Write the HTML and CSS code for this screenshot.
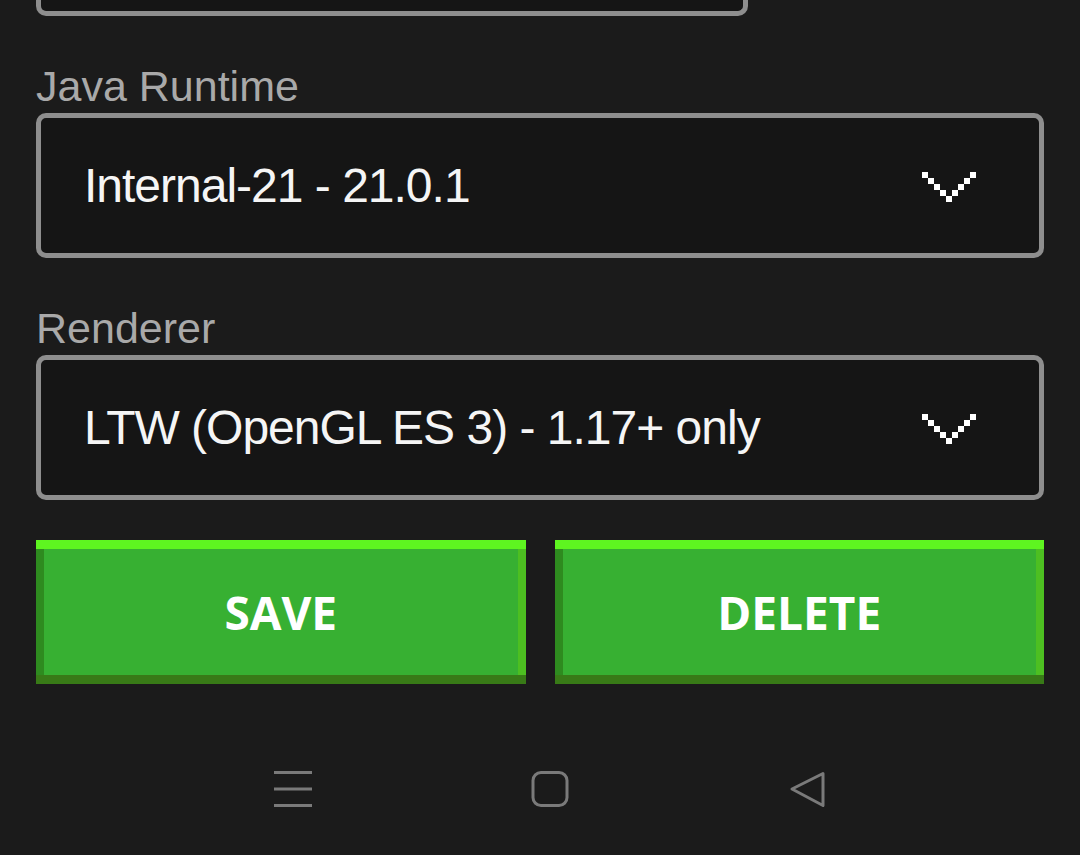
FILE: index.html
```html
<!DOCTYPE html>
<html lang="en">
<head>
<meta charset="utf-8">
<title>Profile editor</title>
<link rel="stylesheet" href="styles.css">
</head>
<body>
<div class="page">
  <div class="stub"></div>

  <div class="label">Java Runtime</div>
  <div class="select">
    <span class="value">Internal-21 - 21.0.1</span>
    <svg class="chev" width="54" height="30" viewBox="0 0 54 30">
      <rect x="0" y="0" width="6" height="6"/>
      <rect x="6" y="6" width="6" height="6"/>
      <rect x="12" y="12" width="6" height="6"/>
      <rect x="18" y="18" width="6" height="6"/>
      <rect x="24" y="24" width="6" height="6"/>
      <rect x="30" y="18" width="6" height="6"/>
      <rect x="36" y="12" width="6" height="6"/>
      <rect x="42" y="6" width="6" height="6"/>
      <rect x="48" y="0" width="6" height="6"/>
    </svg>
  </div>

  <div class="label">Renderer</div>
  <div class="select">
    <span class="value">LTW (OpenGL ES 3) - 1.17+ only</span>
    <svg class="chev" width="54" height="30" viewBox="0 0 54 30">
      <rect x="0" y="0" width="6" height="6"/>
      <rect x="6" y="6" width="6" height="6"/>
      <rect x="12" y="12" width="6" height="6"/>
      <rect x="18" y="18" width="6" height="6"/>
      <rect x="24" y="24" width="6" height="6"/>
      <rect x="30" y="18" width="6" height="6"/>
      <rect x="36" y="12" width="6" height="6"/>
      <rect x="42" y="6" width="6" height="6"/>
      <rect x="48" y="0" width="6" height="6"/>
    </svg>
  </div>

  <div class="buttons">
    <div class="btn">SAVE</div>
    <div class="btn">DELETE</div>
  </div>
</div>

<nav class="navbar">
  <svg class="nav-icon" width="40" height="40" viewBox="0 0 40 40">
    <path d="M1 3.5H39M1 20H39M1 36.5H39" fill="none" stroke="#7a7a7a" stroke-width="3"/>
  </svg>
  <svg class="nav-icon" width="40" height="40" viewBox="0 0 40 40">
    <rect x="3" y="3.5" width="34" height="33" rx="8" fill="none" stroke="#7a7a7a" stroke-width="3"/>
  </svg>
  <svg class="nav-icon" width="40" height="40" viewBox="0 0 40 40">
    <path d="M36 4.5 L5 20 L36 36.5 Z" fill="none" stroke="#7a7a7a" stroke-width="3" stroke-linejoin="round"/>
  </svg>
</nav>
</body>
</html>
```

FILE: styles.css
```css
html, body {
  margin: 0;
  padding: 0;
  background: #1b1b1b;
}

body {
  width: 1080px;
  height: 855px;
  overflow: hidden;
  font-family: "Liberation Sans", Arial, sans-serif;
}

.page {
  padding: 0 36px;
}

.stub {
  width: 712px;
  height: 16px;
  box-sizing: border-box;
  border: 5px solid #8e8e8e;
  border-top: 0;
  border-radius: 0 0 10px 10px;
  background: #151515;
}

.label {
  margin-top: 46px;
  margin-bottom: 3px;
  font-size: 43px;
  line-height: 48px;
  color: #a9a9a9;
}

.select {
  height: 145px;
  box-sizing: border-box;
  border: 5px solid #8e8e8e;
  border-radius: 10px;
  background: #151515;
  display: flex;
  align-items: center;
  justify-content: space-between;
  padding: 0 63px 0 43px;
}

.value {
  font-size: 48px;
  letter-spacing: -1px;
  color: #f5f5f5;
}

.chev {
  fill: #ffffff;
  margin-top: 3px;
}

.buttons {
  margin-top: 40px;
  display: grid;
  grid-template-columns: 1fr 1fr;
  column-gap: 29px;
}

.btn {
  height: 144px;
  background: #37b032;
  box-shadow:
    inset 0 9px 0 #5ef520,
    inset 0 -9px 0 #387a17,
    inset 8px 0 0 #2e8b1f,
    inset -8px 0 0 #4dbf21;
  display: flex;
  align-items: center;
  justify-content: center;
  font-family: "Open Sans", "Noto Sans", sans-serif;
  font-weight: 700;
  font-size: 46px;
  color: #ffffff;
}

.navbar {
  margin-top: 85px;
  display: flex;
  justify-content: center;
  gap: 217px;
  padding-left: 19px;
}

.nav-icon {
  display: block;
}
```
